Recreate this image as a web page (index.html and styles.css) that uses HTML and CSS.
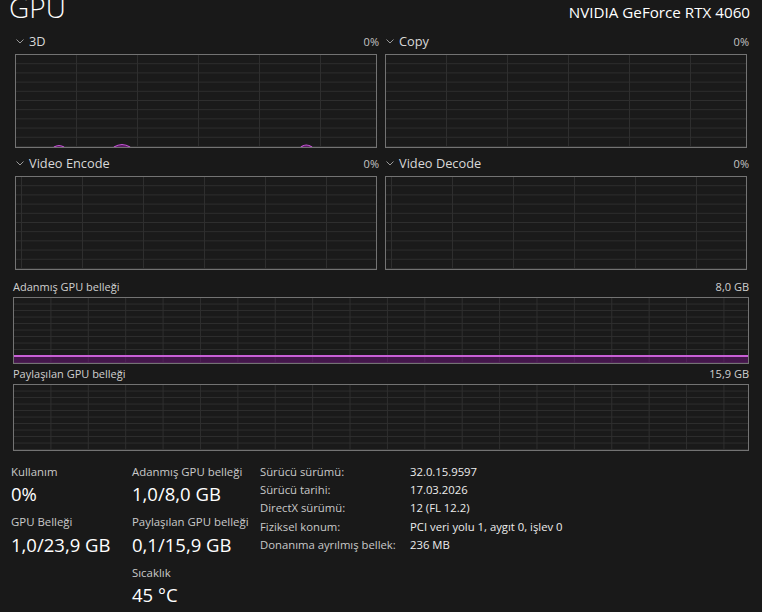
FILE: index.html
```html
<!DOCTYPE html>
<html lang="tr">
<head>
    <meta charset="UTF-8">
    <title>GPU</title>
    <link rel="stylesheet" href="styles.css">
</head>
<body>
    <div class="page">
        <div class="head">
            <h1 class="title">GPU</h1>
            <div class="model">NVIDIA GeForce RTX 4060</div>
        </div>

        <div class="engines">
            <div class="engine">
                <div class="engine-head">
                    <svg class="chev" width="8" height="5" viewBox="0 0 8 5"><polyline points="0.5,0.5 4,4 7.5,0.5" fill="none" stroke="#9a9a9a" stroke-width="1"/></svg>
                    <span class="engine-name">3D</span>
                    <span class="engine-pct">0%</span>
                </div>
                <div class="graph graph-a">
                    <svg class="trace" viewBox="0 0 360 92" preserveAspectRatio="none">
                        <path d="M38 92 Q43 89 48 92 M98 92 Q106 87 114 92 M285 92 Q290 88 296 92" fill="#5a1c63" stroke="#c254d2" stroke-width="1.2"/>
                    </svg>
                </div>
            </div>
            <div class="engine">
                <div class="engine-head">
                    <svg class="chev" width="8" height="5" viewBox="0 0 8 5"><polyline points="0.5,0.5 4,4 7.5,0.5" fill="none" stroke="#9a9a9a" stroke-width="1"/></svg>
                    <span class="engine-name">Copy</span>
                    <span class="engine-pct">0%</span>
                </div>
                <div class="graph graph-a"></div>
            </div>
            <div class="engine">
                <div class="engine-head">
                    <svg class="chev" width="8" height="5" viewBox="0 0 8 5"><polyline points="0.5,0.5 4,4 7.5,0.5" fill="none" stroke="#9a9a9a" stroke-width="1"/></svg>
                    <span class="engine-name">Video Encode</span>
                    <span class="engine-pct">0%</span>
                </div>
                <div class="graph graph-b"></div>
            </div>
            <div class="engine">
                <div class="engine-head">
                    <svg class="chev" width="8" height="5" viewBox="0 0 8 5"><polyline points="0.5,0.5 4,4 7.5,0.5" fill="none" stroke="#9a9a9a" stroke-width="1"/></svg>
                    <span class="engine-name">Video Decode</span>
                    <span class="engine-pct">0%</span>
                </div>
                <div class="graph graph-b"></div>
            </div>
        </div>

        <div class="mem">
            <div class="mem-head">
                <span>Adanmış GPU belleği</span>
                <span>8,0 GB</span>
            </div>
            <div class="graph graph-mem">
                <div class="mem-fill"></div>
            </div>
            <div class="mem-head">
                <span>Paylaşılan GPU belleği</span>
                <span>15,9 GB</span>
            </div>
            <div class="graph graph-mem"></div>
        </div>

        <div class="stats">
            <div class="stat-col">
                <div class="stat">
                    <div class="stat-label">Kullanım</div>
                    <div class="stat-value">0%</div>
                </div>
                <div class="stat">
                    <div class="stat-label">GPU Belleği</div>
                    <div class="stat-value">1,0/23,9 GB</div>
                </div>
            </div>
            <div class="stat-col">
                <div class="stat">
                    <div class="stat-label">Adanmış GPU belleği</div>
                    <div class="stat-value">1,0/8,0 GB</div>
                </div>
                <div class="stat">
                    <div class="stat-label">Paylaşılan GPU belleği</div>
                    <div class="stat-value">0,1/15,9 GB</div>
                </div>
                <div class="stat">
                    <div class="stat-label">Sıcaklık</div>
                    <div class="stat-value">45 °C</div>
                </div>
            </div>
            <div class="props">
                <span class="prop-key">Sürücü sürümü:</span><span class="prop-val">32.0.15.9597</span>
                <span class="prop-key">Sürücü tarihi:</span><span class="prop-val">17.03.2026</span>
                <span class="prop-key">DirectX sürümü:</span><span class="prop-val">12 (FL 12.2)</span>
                <span class="prop-key">Fiziksel konum:</span><span class="prop-val">PCI veri yolu 1, aygıt 0, işlev 0</span>
                <span class="prop-key">Donanıma ayrılmış bellek:</span><span class="prop-val">236 MB</span>
            </div>
        </div>
    </div>
</body>
</html>
```

FILE: styles.css
```css
* {
    box-sizing: border-box;
}
html, body {
    margin: 0;
    height: 100%;
    background-color: #191919;
    overflow: hidden;
}
body {
    font-family: "Open Sans", "Noto Sans", sans-serif;
    color: #d6d6d6;
}
.page {
    width: 762px;
}

/* baslik */
.head {
    display: flex;
    justify-content: space-between;
    align-items: baseline;
    height: 21px;
    padding: 0 12px 0 9px;
}
.title {
    margin: -8px 0 0 0;
    font-size: 28px;
    line-height: 30px;
    font-weight: 300;
    color: #ffffff;
}
.model {
    font-size: 15.2px;
    color: #ffffff;
}

/* motor grafikleri */
.engines {
    display: grid;
    grid-template-columns: 1fr 1fr;
    column-gap: 8px;
    row-gap: 7px;
    padding: 0 15px 0 15px;
    margin-top: 12px;
}
.engine-head {
    display: flex;
    align-items: baseline;
    height: 17px;
    line-height: 17px;
    margin-bottom: 4px;
}
.chev {
    align-self: center;
    margin: 0 5px 0 1px;
}
.engine-name {
    font-size: 12.8px;
    color: #d8d8d8;
}
.engine-pct {
    margin-left: auto;
    margin-right: -2px;
    font-size: 11px;
    color: #c4c4c4;
}
.graph {
    position: relative;
    border: 1px solid #737373;
    background-color: #1a1a1a;
    background-image:
        linear-gradient(to left, #2e2e2e 1px, transparent 1px),
        linear-gradient(to top, #2e2e2e 1px, transparent 1px);
}
.graph-a {
    height: 94px;
    background-size: 61px 100%, 100% 10%;
    background-position: 0 0, 0 0;
}
.graph-b {
    height: 94px;
    background-size: 61px 100%, 100% 10%;
    background-position: 6px 0, 0 0;
}
.trace {
    position: absolute;
    left: 0;
    bottom: 0;
    width: 100%;
    height: 100%;
}

/* bellek */
.mem {
    padding: 0 13px;
    margin-top: 10px;
}
.mem-head {
    display: flex;
    justify-content: space-between;
    font-size: 11px;
    line-height: 14px;
    color: #d0d0d0;
    margin-bottom: 3px;
}
.graph-mem {
    height: 67px;
    margin-bottom: 3px;
    display: flex;
    flex-direction: column;
    justify-content: flex-end;
    background-size: 37.4px 100%, 100% 10%;
    background-position: 0 0, 0 0;
}
.mem-fill {
    height: 8px;
    border-top: 2px solid #c85fd6;
    background-color: rgba(120, 20, 135, 0.45);
}

/* istatistikler */
.stats {
    display: grid;
    grid-template-columns: 121px 128px auto;
    padding-left: 11px;
    margin-top: 14px;
}
.stat {
    margin-bottom: 9px;
}
.stat-label {
    font-size: 11.4px;
    line-height: 14px;
    color: #c9c9c9;
    margin-bottom: 3.4px;
}
.stat-value {
    font-size: 18.5px;
    line-height: 24px;
    color: #ffffff;
}
.props {
    display: grid;
    grid-template-columns: 150px auto;
    grid-auto-rows: 18.2px;
    align-content: start;
    margin-top: -2px;
    font-size: 11.3px;
    line-height: 18px;
}
.prop-key {
    color: #c9c9c9;
}
.prop-val {
    color: #ececec;
}
```
